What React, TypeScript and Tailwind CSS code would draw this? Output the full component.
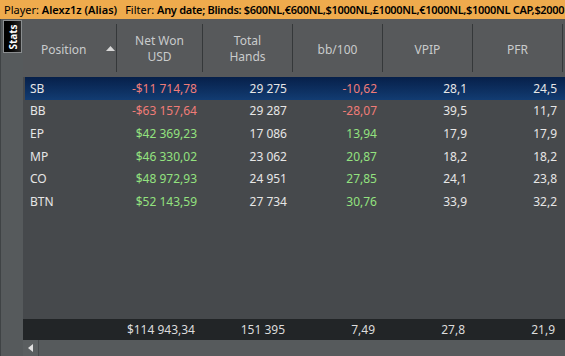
const rows = [
  { pos: "SB", net: "-$11 714,78", hands: "29 275", bb: "-10,62", vpip: "28,1", pfr: "24,5", neg: true },
  { pos: "BB", net: "-$63 157,64", hands: "29 287", bb: "-28,07", vpip: "39,5", pfr: "11,7", neg: true },
  { pos: "EP", net: "$42 369,23", hands: "17 086", bb: "13,94", vpip: "17,9", pfr: "17,9", neg: false },
  { pos: "MP", net: "$46 330,02", hands: "23 062", bb: "20,87", vpip: "18,2", pfr: "18,2", neg: false },
  { pos: "CO", net: "$48 972,93", hands: "24 951", bb: "27,85", vpip: "24,1", pfr: "23,8", neg: false },
  { pos: "BTN", net: "$52 143,59", hands: "27 734", bb: "30,76", vpip: "33,9", pfr: "32,2", neg: false },
];

const cols = "grid grid-cols-[94px_86px_90px_90px_90px_90px]";

const App = () => {
  return (
    <div className="flex h-[356px] w-[565px] flex-col overflow-hidden bg-[#46494c] font-['Noto_Sans','Open_Sans',sans-serif] text-[12px]">
      {/* filtro */}
      <div className="h-[19px] shrink-0 overflow-hidden whitespace-nowrap bg-[#efab4d] pl-[4px] text-[11px] leading-[19px] text-black">
        Player: <b className="font-semibold">Alexz1z (Alias)</b>
        <span className="ml-[8px]">Filter: </span>
        <b className="font-semibold tracking-[-0.3px]">
          Any date; Blinds: $600NL,€600NL,$1000NL,£1000NL,€1000NL,$1000NL CAP,$2000
        </b>
      </div>

      <div className="flex min-h-0 flex-1">
        <div className="w-[23px] shrink-0 border-l border-[#3f4345] bg-[#565a5c] pt-[1px]">
          <div className="ml-[2px] flex h-[33px] w-[19px] items-center justify-center border border-[#8a8d8f] bg-gradient-to-r from-[#000] to-[#2a2a2a]">
            <span className="-rotate-90 text-[10px] font-bold leading-none text-white">Stats</span>
          </div>
        </div>

        <div className="flex min-w-0 flex-1 flex-col">
          {/* cabeçalho */}
          <div className={`${cols} h-[58px] shrink-0 bg-[#57595b] text-[#c9cbcc]`}>
            <div className="my-[5px] flex items-center border-r border-[#35383a] pl-[18px] pt-[3px]">
              <span>Position</span>
              <svg width="9" height="5" viewBox="0 0 9 5" className="ml-[20px] mt-[-2px]">
                <polygon points="0,5 4.5,0 9,5" fill="#d8d8d8" />
              </svg>
            </div>
            <div className="my-[5px] flex items-center justify-center border-r border-[#35383a] pt-[2px] text-center leading-[16px]">
              Net Won
              <br />
              USD
            </div>
            <div className="my-[5px] flex items-center justify-center border-r border-[#35383a] pt-[2px] text-center leading-[16px]">
              Total
              <br />
              Hands
            </div>
            <div className="my-[5px] flex items-center justify-center border-r border-[#35383a] pt-[3px]">bb/100</div>
            <div className="my-[5px] flex items-center justify-center border-r border-[#35383a] pt-[3px]">VPIP</div>
            <div className="my-[5px] flex items-center justify-center border-r border-[#35383a] pt-[3px]">PFR</div>
          </div>

          {/* linhas */}
          <div className="min-h-0 flex-1 bg-[#46494c]">
            {rows.map((r, idx) => (
              <div
                key={idx}
                className={`${cols} ml-[2px] h-[22.6px] items-center pt-[1px] text-[#e6e6e6] ${
                  idx === 0 ? "bg-gradient-to-b from-[#07204a] to-[#123c72]" : ""
                }`}
              >
                <div className="pl-[5px]">{r.pos}</div>
                <div className={`pr-[8px] text-right ${r.neg ? "text-[#f07c78]" : "text-[#93e27f]"}`}>{r.net}</div>
                <div className="pr-[8px] text-right">{r.hands}</div>
                <div className={`pr-[8px] text-right ${r.neg ? "text-[#f07c78]" : "text-[#93e27f]"}`}>{r.bb}</div>
                <div className="pr-[8px] text-right">{r.vpip}</div>
                <div className="pr-[8px] text-right">{r.pfr}</div>
              </div>
            ))}
          </div>

          {/* totais */}
          <div className={`${cols} h-[21px] shrink-0 items-center bg-[#222527] text-[#dcdcdc]`}>
            <div />
            <div className="pr-[8px] text-right">$114 943,34</div>
            <div className="pr-[8px] text-right">151 395</div>
            <div className="pr-[8px] text-right">7,49</div>
            <div className="pr-[8px] text-right">27,8</div>
            <div className="pr-[8px] text-right">21,9</div>
          </div>

          {/* scroll */}
          <div className="flex h-[16px] shrink-0 bg-[#565a5c]">
            <div className="flex w-[16px] items-center justify-center border-r border-[#45494b] bg-[#5a5e60]">
              <svg width="5" height="8" viewBox="0 0 5 8">
                <polygon points="5,0 0,4 5,8" fill="#e0e0e0" />
              </svg>
            </div>
            <div className="flex-1" />
          </div>
        </div>
      </div>
    </div>
  );
};

export default App;
